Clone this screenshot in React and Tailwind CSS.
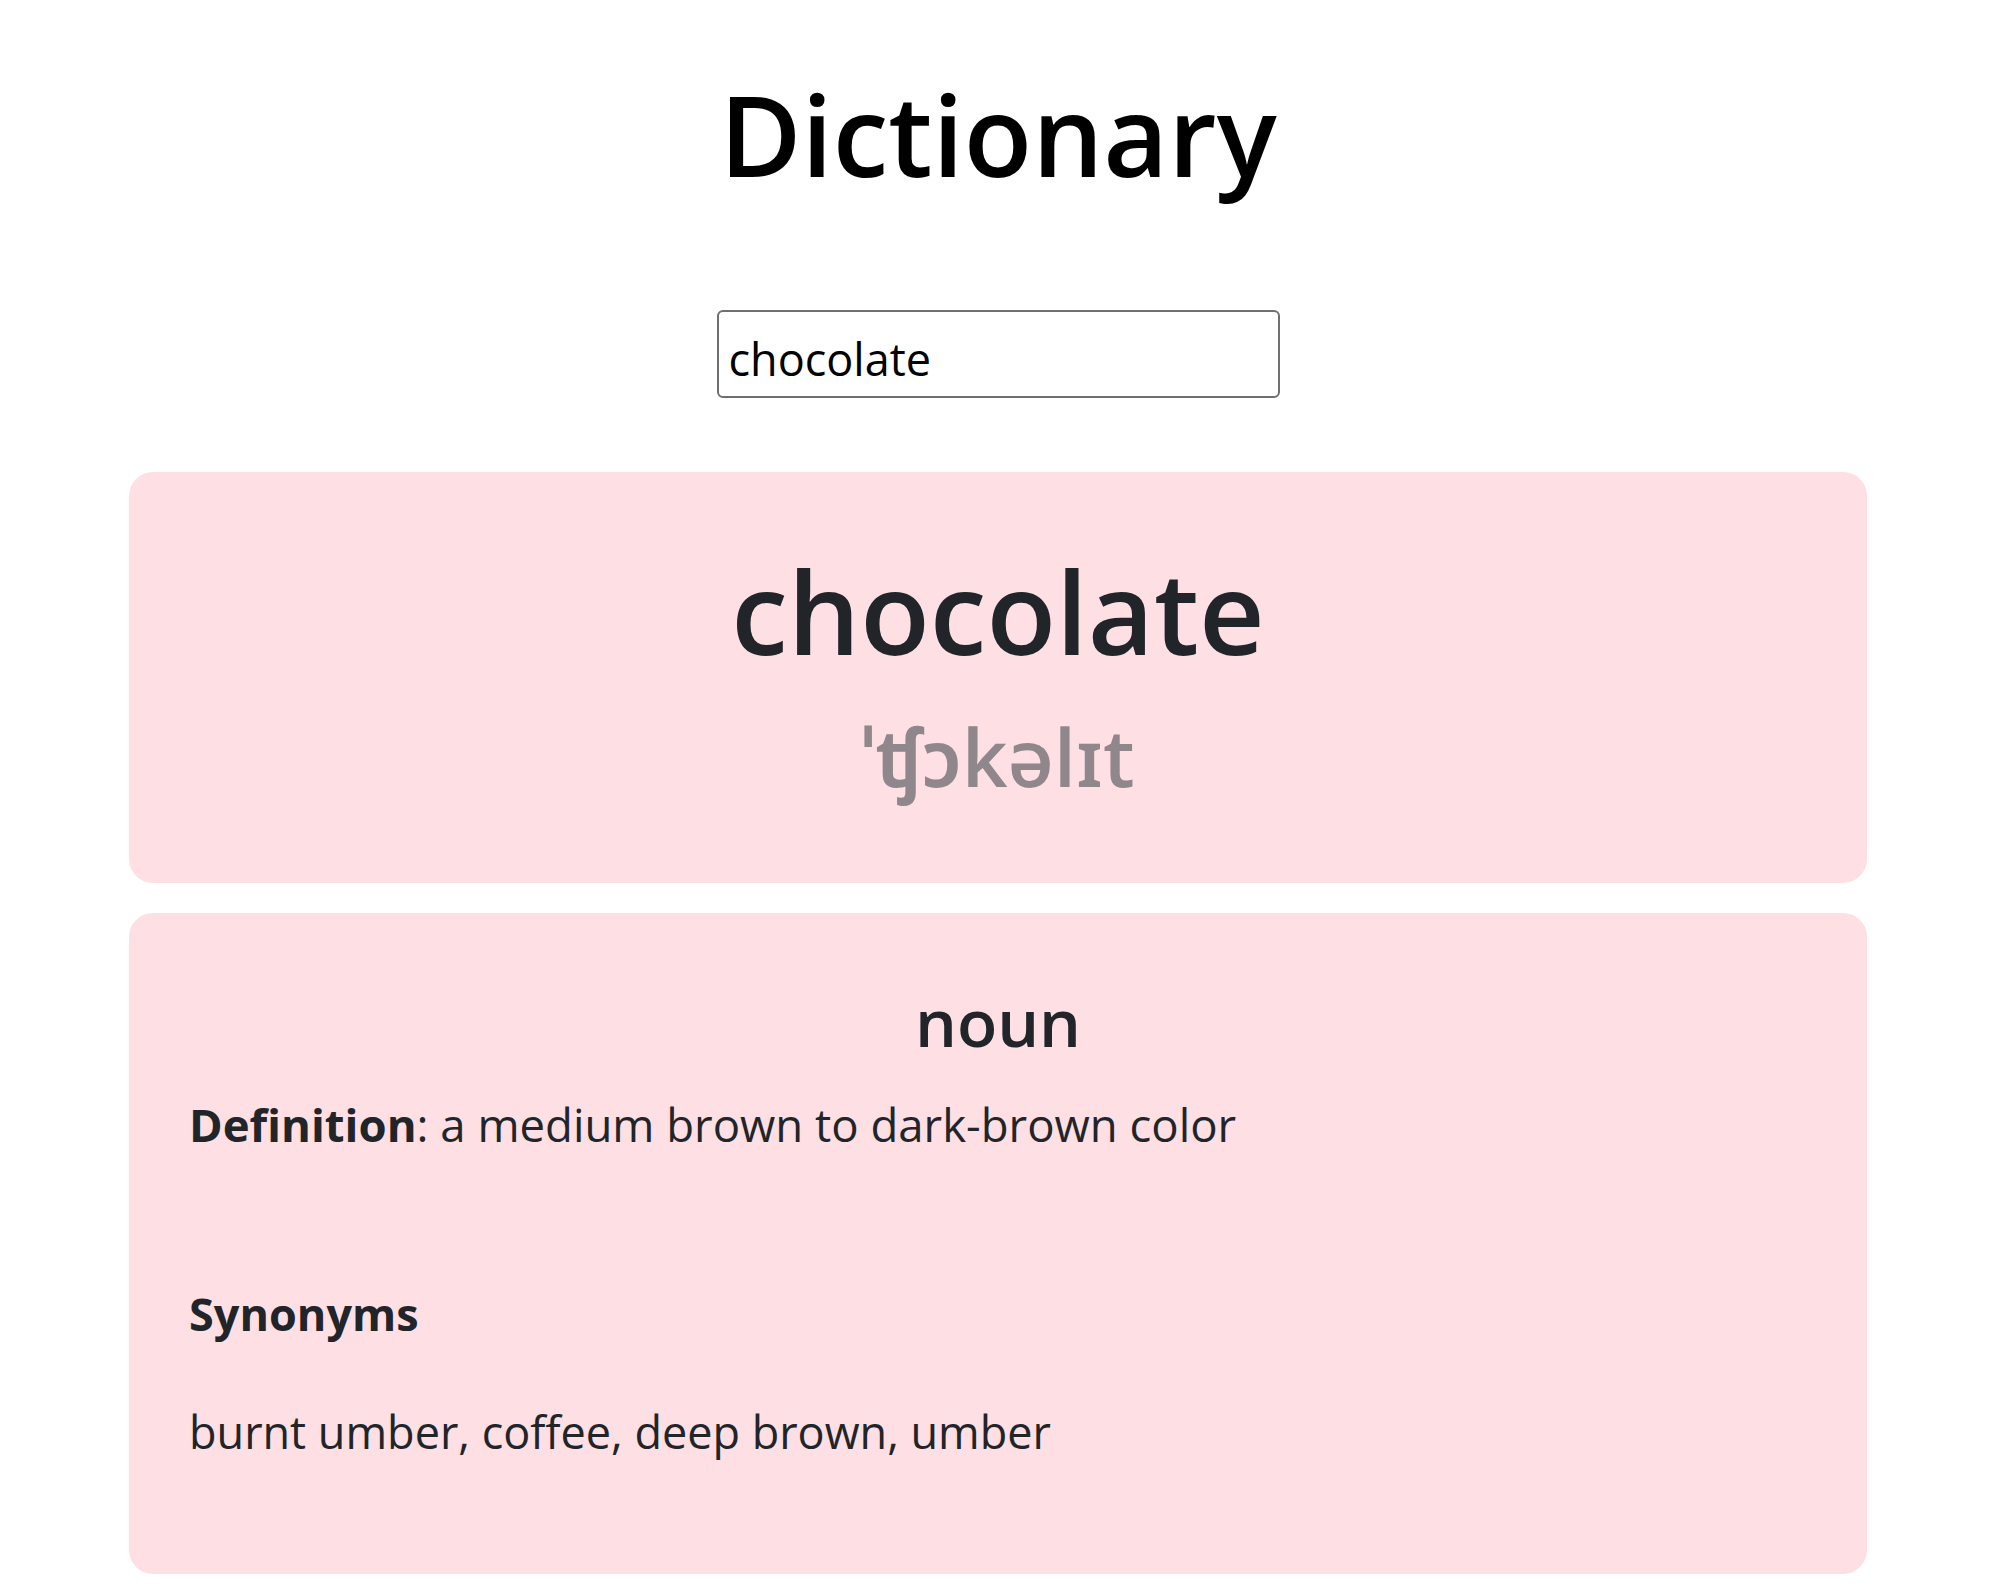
import { useState } from 'react';

const font = { fontFamily: '"Open Sans", "Noto Sans", "DejaVu Sans", sans-serif' };

export default function App() {
  const [word, setWord] = useState('chocolate');

  return (
    <div className="min-h-screen bg-white pl-[129px] pr-[122px]" style={font}>
      <h1 className="mt-[78px] text-center text-[112px] font-semibold leading-none text-black">Dictionary</h1>

      <div className="mt-[120px] flex justify-center">
        <input
          value={word}
          onChange={(event) => setWord(event.target.value)}
          className="h-[88px] w-[563px] rounded-[6px] border-2 border-[#6f6f6f] bg-white pl-[10px] pt-[8px] text-[45px] text-black outline-none"
          style={font}
        />
      </div>

      <section className="mt-[74px] rounded-[24px] bg-[#fddfe4] pt-[82px] pb-[87px] text-center">
        <div className="text-[114px] font-semibold leading-none text-[#212529]">chocolate</div>
        <div className="mt-[48px] text-[80px] font-semibold leading-none text-[#8f878b]">ˈʧɔkəlɪt</div>
      </section>

      <section className="mt-[30px] rounded-[24px] bg-[#fddfe4] px-[60px] pt-[75px] pb-[106px] text-[#212529]">
        <h3 className="text-center text-[66px] font-semibold leading-none">noun</h3>
        <p className="mt-[34px] text-[45.5px] leading-[72px]">
          <strong className="font-bold">Definition</strong>: a medium brown to dark-brown color
        </p>
        <h4 className="mt-[118px] text-[45px] font-bold leading-[72px]">Synonyms</h4>
        <p className="mt-[46px] text-[45px] leading-[72px]">burnt umber, coffee, deep brown, umber</p>
      </section>
    </div>
  );
}
